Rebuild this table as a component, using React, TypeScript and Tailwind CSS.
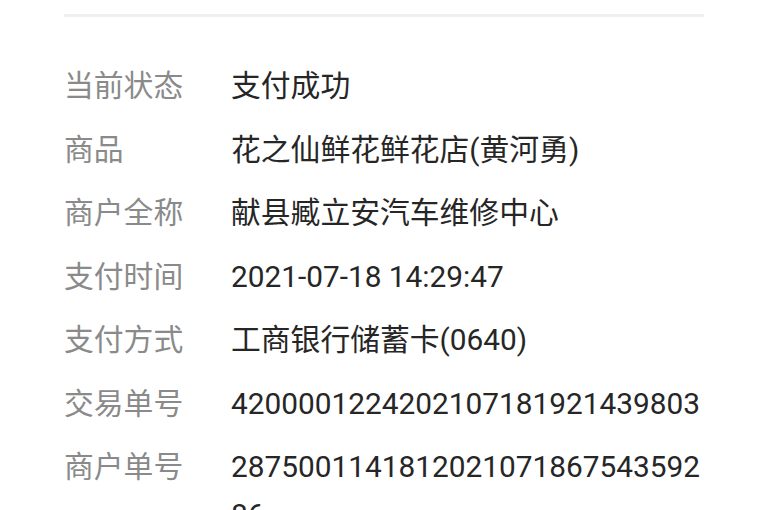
import React from "react";

const rows: [string, string][] = [
  ["当前状态", "支付成功"],
  ["商品", "花之仙鲜花鲜花店(黄河勇)"],
  ["商户全称", "献县臧立安汽车维修中心"],
  ["支付时间", "2021-07-18 14:29:47"],
  ["支付方式", "工商银行储蓄卡(0640)"],
  ["交易单号", "4200001224202107181921439803"],
  ["商户单号", "287500114181202107186754359286"],
];

export default function App() {
  return (
    <div
      className="h-[510px] w-[768px] overflow-hidden bg-white"
      style={{ fontFamily: 'Roboto, "Noto Sans CJK SC", sans-serif' }}
    >
      <div className="mx-[64px] pt-[14px]">
        <div className="h-[3px] bg-[#efefef]" />
        <div className="mt-[45px] flex flex-col gap-y-[15.5px]">
          {rows.map(([label, value]) => (
            <div key={label} className="flex text-[29.8px] leading-[48px]">
              <div className="w-[167px] shrink-0 text-[#8a8a8a]">{label}</div>
              <div className="w-[476px] break-all text-[#262626]">{value}</div>
            </div>
          ))}
        </div>
      </div>
    </div>
  );
}
